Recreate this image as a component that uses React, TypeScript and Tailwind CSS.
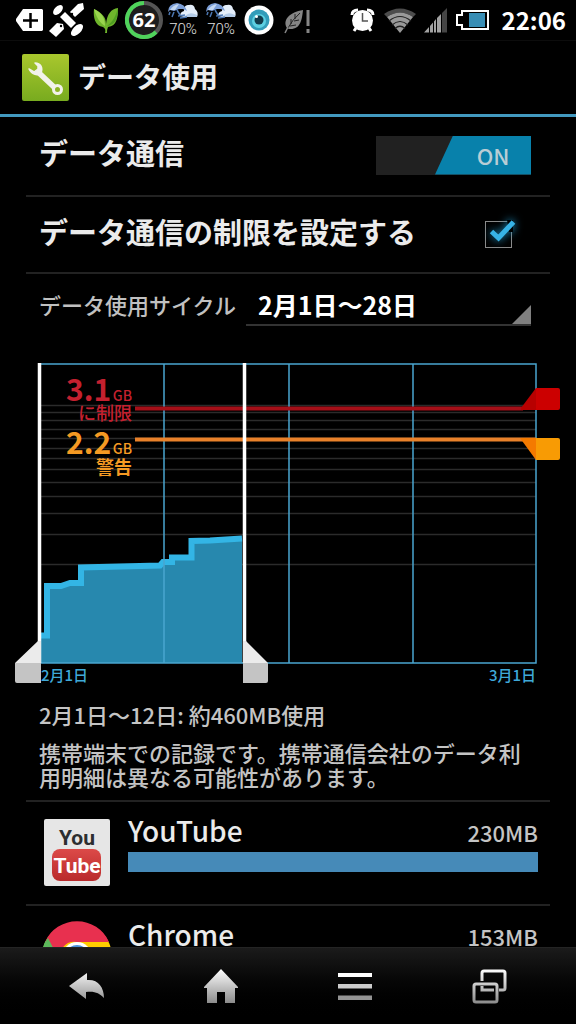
import React, { useState } from 'react';

const TagIcon = () => (
    <svg width="27" height="40" viewBox="0 0 27 40" className="shrink-0">
        <path d="M7 9H26L27 10V30L26 31H7L0 21V19Z" fill="#fff" />
        <path d="M14.500 13V28M7 20.500H22" stroke="#000" strokeWidth="2.5" />
    </svg>
);

const SatelliteIcon = () => (
    <svg width="35" height="40" viewBox="0 0 35 40" className="shrink-0" fill="#fff">
        <ellipse cx="9" cy="10" rx="3.5" ry="6" transform="rotate(45 9 10)" />
        <ellipse cx="28" cy="30" rx="4" ry="7.5" transform="rotate(45 28 30)" />
        <path d="M11 17L16 12L27 23L22 28Z" />
        <path d="M21 12L29 4L34 3L35 9L26 17Z" />
        <path d="M0 31L8 23L14 24L15 29L7 37Z" />
        <circle cx="23" cy="14" r="1.2" fill="#000" />
        <circle cx="12" cy="26" r="1.2" fill="#000" />
    </svg>
);

const GreenLeafIcon = () => (
    <svg width="29" height="40" viewBox="0 0 29 40" className="shrink-0">
        <path d="M15 33C16 30 15 28 13 27C5 26 3 17 4 9C12 13 16 17 16 24C17 14 21 9 28 8C28 17 27 26 18 27Q17 29 17 33Z" fill="#6fb52c" />
        <path d="M4 9C12 13 15 18 15 26C10 23 6 17 4 9Z" fill="#9ad64e" />
        <path d="M28 8C28 17 26 25 17 26C23 22 26 15 28 8Z" fill="#4f9e22" />
    </svg>
);

const RingIcon = () => (
    <svg width="36" height="40" viewBox="0 0 36 40" className="shrink-0 overflow-visible">
        <circle cx="19" cy="20" r="17" fill="#1d1d1d" stroke="#555" strokeWidth="4" />
        <path d="M19 3A17 17 0 1 0 31 32" fill="none" stroke="#4fd35b" strokeWidth="4" />
        <text x="19" y="27" textAnchor="middle" fill="#fff" fontSize="20" fontWeight="700" fontFamily="'Open Sans', sans-serif">62</text>
    </svg>
);

const RainIcon = () => (
    <svg width="32" height="40" viewBox="0 0 32 40" className="shrink-0">
        <path d="M13 16Q13 12 17 11Q17 4 22 5Q27 4 28 9Q32 12 30 17H17Z" fill="#e4eefa" />
        <path d="M18 16Q23 11 30 15V17H18Z" fill="#b4cce8" />
        <path d="M1 12Q1 4 10 3Q18 4 20 11L16 9L12 9L7 11L3 10Z" fill="#7c9fd8" />
        <path d="M3 10Q6 5 12 4L8 10Z" fill="#c4d8f2" />
        <path d="M10 10L13 15M3 12L2 15M7 12L5 17M11 16L18 15M13 18L20 17" fill="none" stroke="#4c78b4" strokeWidth="1.5" />
        <text x="16" y="34" textAnchor="middle" fill="#e0e0e0" fontSize="15" fontWeight="300" fontFamily="Roboto, sans-serif">70%</text>
    </svg>
);

const EyeIcon = () => (
    <svg width="32" height="40" viewBox="0 0 32 40" className="shrink-0">
        <circle cx="16" cy="20" r="14.5" fill="#fff" />
        <circle cx="16" cy="20" r="10.5" fill="#329cb9" />
        <circle cx="16" cy="21" r="7" fill="#5cd0e2" />
        <circle cx="16" cy="20" r="4.5" fill="#123b4b" />
        <circle cx="13.500" cy="16.500" r="1.5" fill="#fff" />
    </svg>
);

const GrayLeafIcon = () => (
    <svg width="30" height="40" viewBox="0 0 30 40" className="shrink-0">
        <path d="M6 28C1 20 9 12 22 10C21 19 20 30 8 29Z" fill="#858585" />
        <path d="M7 28Q11 20 19 13M10 24V19M14 19V14M9 26L15 25M13 21L18 20" fill="none" stroke="#222" />
        <path d="M4 33L7 27" stroke="#858585" strokeWidth="1.5" />
        <path d="M27 10V26M27 29V33" stroke="#858585" strokeWidth="3" />
    </svg>
);

const AlarmIcon = () => (
    <svg width="26" height="40" viewBox="0 0 26 40" className="shrink-0">
        <path d="M2 15Q2 10 8 10M17 10Q23 10 23 15M6 28L4 31M19 28L21 31" fill="none" stroke="#fff" strokeWidth="3" />
        <circle cx="12.500" cy="20.500" r="10.500" fill="#fff" />
        <path d="M12.500 13V21H18" fill="none" stroke="#555" strokeWidth="1.5" />
    </svg>
);

const WifiIcon = () => (
    <svg width="32" height="40" viewBox="0 0 32 40" className="shrink-0">
        <path d="M0 14Q16 3 32 14L29 17Q16 8 3 17Z" fill="#4c4c4c" />
        <path d="M3 17Q16 8 29 17L16 33Z" fill="#999" />
        <path d="M5 21Q16 12 27 21M8 25Q16 18 24 25M11 28.500Q16 24 21 28.500" fill="none" stroke="#222" strokeWidth="1.2" />
    </svg>
);

const SignalIcon = () => (
    <svg width="24" height="40" viewBox="0 0 24 40" className="shrink-0" fill="#a2a2a2">
        <path d="M0 32.500L5 27V32.500ZM6 26L9 22.500V32.500H6ZM10 21.500L12 19V32.500H10ZM13 18L17 14V32.500H13Z" />
        <path d="M18 13L23 8V32.500H18Z" fill="#454545" />
    </svg>
);

const BatteryIcon = () => (
    <svg width="34" height="40" viewBox="0 0 34 40" className="shrink-0">
        <path d="M6 11H32V29H6V25H1V15H6Z" fill="none" stroke="#fff" strokeWidth="2" />
        <path d="M13 13H29V27H13Z" fill="#398eb5" />
    </svg>
);

const StatusBar = () => (
    <div className="flex h-[41px] shrink-0 items-center gap-1.5 border-b border-[#0c0c0c] pr-2.5 pl-4">
        <TagIcon />
        <SatelliteIcon />
        <GreenLeafIcon />
        <RingIcon />
        <RainIcon />
        <RainIcon />
        <EyeIcon />
        <GrayLeafIcon />
        <div className="ml-auto flex items-center gap-2">
            <AlarmIcon />
            <WifiIcon />
            <SignalIcon />
            <BatteryIcon />
            <time className="ml-1 text-2xl leading-10 font-bold">22:06</time>
        </div>
    </div>
);

const SettingsIcon = () => (
    <svg width="48" height="48" viewBox="0 0 48 48" className="shrink-0">
        <defs>
            <linearGradient id="settings" x1="0" y1="0" x2="0" y2="1">
                <stop offset="0" stopColor="#a9c72d" />
                <stop offset="1" stopColor="#78ab1f" />
            </linearGradient>
        </defs>
        <rect x="0" y="0" width="47" height="47" rx="2" fill="url(#settings)" />
        <path d="M16 18L33 34" stroke="#f2f2ea" strokeWidth="5.5" />
        <path d="M13 9C19 9 21 14 19 19C16 22 10 21 7 15L12 18L16 15L16 12Z" fill="#f2f2ea" stroke="#f2f2ea" strokeWidth="1.5" strokeLinejoin="round" />
        <circle cx="35.500" cy="35.500" r="4" fill="#8db526" stroke="#f2f2ea" strokeWidth="3" />
    </svg>
);

const gridLines = [405, 412, 420, 429, 438, 448, 458, 469, 482, 496, 513, 534, 564];

const UsageChart = () => (
    <svg viewBox="0 350 576 342" className="block w-full" role="img" aria-label="データ使用量">
        {gridLines.map((y) => (
            <path key={y} d={`M41 ${y + 0.5}H536`} stroke="#2b2b2b" strokeWidth="1.5" />
        ))}
        <path d="M41 635H47V586H61L70 583H81V567L162 565V562L172 561V557H191V541L242 538V663H41Z" fill="#2788ae" />
        <path d="M41 635.500H47V586H61L70 583H81V567.500L160 565.500L163 562H172V557.500H191.500V541L210 540.500L242 538.500" fill="none" stroke="#33b5e5" strokeWidth="6" />
        <path d="M39 364H536V663H39ZM164 364V663M289 364V663M413 364V663" fill="none" stroke="#4aa5cf" strokeWidth="1.5" />

        <path d="M135 408.500H523" stroke="#a50f18" strokeWidth="4" />
        <path d="M521 408L536 388V410H521Z" fill="#b80000" />
        <path d="M536 388H558Q560 388 560 390V408Q560 410 558 410H536Z" fill="#cc0000" />
        <path d="M135 439.500H536" stroke="#e9812a" strokeWidth="4" />
        <path d="M520 438H536V460Z" fill="#f47a00" />
        <path d="M536 438H558Q560 438 560 440V458Q560 460 558 460H536Z" fill="#f89b04" />

        <path d="M39.500 363V663M244.500 363V663" stroke="#fff" strokeWidth="3.5" />
        <path d="M38 641L15 663H41V641ZM243 641H246L268 663H243Z" fill="#ebebeb" />
        <path d="M15 663H41V683H17Q15 683 15 681ZM243 663H268V681Q268 683 266 683H243Z" fill="#c4c4c4" />

        <g fill="#c4202f" fontWeight="700">
            <text x="66" y="401" fontSize="30">3.1</text>
            <text x="132" y="401" fontSize="14" fontWeight="500" textAnchor="end">GB</text>
            <text x="132" y="420" fontSize="18" fontWeight="500" textAnchor="end">に制限</text>
        </g>
        <g fill="#f59a23" fontWeight="700">
            <text x="66" y="454" fontSize="30">2.2</text>
            <text x="132" y="454" fontSize="14" fontWeight="500" textAnchor="end">GB</text>
            <text x="132" y="474" fontSize="18" textAnchor="end">警告</text>
        </g>
        <g fill="#3fa9d8" fontSize="15" fontWeight="500">
            <text x="41" y="681">2月1日</text>
            <text x="536" y="681" textAnchor="end">3月1日</text>
        </g>
    </svg>
);

const YouTubeIcon = () => (
    <svg width="68" height="68" viewBox="0 0 68 68" className="shrink-0">
        <defs>
            <linearGradient id="tube" x1="0" y1="0" x2="0" y2="1">
                <stop offset="0" stopColor="#dc4a48" />
                <stop offset="1" stopColor="#b92a2b" />
            </linearGradient>
        </defs>
        <rect x="1" y="0" width="66" height="67" rx="2" fill="#e6e6e6" />
        <rect x="9" y="30" width="49" height="32" rx="8" fill="url(#tube)" />
        <g fontFamily="Roboto, sans-serif" fontWeight="700" textAnchor="middle">
            <text x="34" y="26" fontSize="21" fill="#2c2e30">You</text>
            <text x="34" y="54" fontSize="21" fill="#fff">Tube</text>
        </g>
    </svg>
);

const ChromeIcon = () => (
    <svg width="68" height="68" viewBox="0 0 68 68" className="shrink-0 overflow-visible">
        <circle cx="34" cy="34" r="35" fill="#fc0" />
        <path d="M2 19A35 35 0 0 1 66 19H34A15 15 0 0 0 19 42Z" fill="#e8304f" />
        <path d="M2 19A35 35 0 0 0 32 69L47 42A15 15 0 0 1 19 42L5 15Z" fill="#5cb85c" />
        <circle cx="34" cy="34" r="15" fill="#fff" />
        <circle cx="34" cy="34" r="12" fill="#4a90d9" />
    </svg>
);

const apps = [
    { name: 'YouTube', usage: '230MB', percent: 100, icon: <YouTubeIcon /> },
    { name: 'Chrome', usage: '153MB', percent: 67, icon: <ChromeIcon /> },
];

const NavBar = () => (
    <nav className="grid h-[77px] shrink-0 grid-cols-4 border-t border-[#242424] bg-linear-to-b from-[#1b1b1b] to-black px-5">
        <svg width="0" height="0" className="absolute">
            <defs>
                <linearGradient id="nav" gradientUnits="userSpaceOnUse" x1="0" y1="2" x2="0" y2="36">
                    <stop offset="0" stopColor="#fff" />
                    <stop offset="1" stopColor="#8c8c8c" />
                </linearGradient>
            </defs>
        </svg>
        <button type="button" aria-label="戻る" className="flex items-center justify-center">
            <svg width="36" height="38" viewBox="0 0 36 38">
                <path d="M0 19L18 6V13C29 12 35 20 35 31C30 26 26 24 17 25V32Z" fill="url(#nav)" />
            </svg>
        </button>
        <button type="button" aria-label="ホーム" className="flex items-center justify-center">
            <svg width="36" height="38" viewBox="0 0 36 38">
                <path d="M18 2L35 20V21H32V36H22V25H14V36H4V21H1V20Z" fill="url(#nav)" />
            </svg>
        </button>
        <button type="button" aria-label="メニュー" className="flex items-center justify-center">
            <svg width="36" height="38" viewBox="0 0 36 38">
                <path d="M1 6H35V10H1Z" fill="#fff" />
                <path d="M1 17H35V21.500H1Z" fill="#ccc" />
                <path d="M1 28.500H35V33H1Z" fill="#939393" />
            </svg>
        </button>
        <button type="button" aria-label="履歴" className="flex items-center justify-center">
            <svg width="36" height="38" viewBox="0 0 36 38" fill="none" stroke="url(#nav)" strokeWidth="3">
                <path d="M11 14V6Q11 4 13 4H32Q34 4 34 6V21Q34 23 32 23H28M11 19V23H23" />
                <rect x="3" y="17" width="23" height="18" rx="2" />
            </svg>
        </button>
    </nav>
);

const App = () => {
    const [enabled, setEnabled] = useState(true);
    const [limited, setLimited] = useState(true);

    return (
        <div className="flex h-screen flex-col overflow-hidden bg-black font-['Noto_Sans_CJK_JP',sans-serif] font-medium text-white">
            <StatusBar />
            <header className="flex h-[76px] shrink-0 items-center gap-2 border-b-3 border-[#4299bf] px-[22px]">
                <SettingsIcon />
                <h1 className="pb-1 text-[28px] leading-10 font-bold text-[#ebebeb]">データ使用</h1>
            </header>

            <main className="min-h-0 flex-1 overflow-hidden">
                <section className="px-[26px]">
                    <div className="flex h-20 items-center justify-between border-b-2 border-[#222] pr-[19px] pl-[13px]">
                        <span id="data-label" className="pb-2 text-[29px] leading-10 font-bold text-[#ebebeb]">データ通信</span>
                        <button
                            type="button"
                            role="switch"
                            aria-checked={enabled}
                            aria-labelledby="data-label"
                            onClick={() => setEnabled(!enabled)}
                            className="mb-0.5 flex h-[39px] w-[155px] justify-end bg-[#212121]"
                        >
                            <span className="flex h-full w-24 items-center justify-center bg-[#0881ab] pl-5 text-[22px] text-[#b9cdd5] [clip-path:polygon(18px_0,100%_0,100%_100%,0_100%)]">
                                {enabled ? 'ON' : 'OFF'}
                            </span>
                        </button>
                    </div>

                    <div className="flex h-[77px] items-center justify-between border-b-2 border-[#222] pr-[38px] pl-[13px]">
                        <label htmlFor="limit" className="pb-2 text-[29px] leading-10 font-bold text-[#ebebeb]">データ通信の制限を設定する</label>
                        <div className="relative flex">
                            <input
                                id="limit"
                                type="checkbox"
                                checked={limited}
                                onChange={() => setLimited(!limited)}
                                className="size-[27px] appearance-none border border-[#8a8a8a]"
                            />
                            {limited && (
                                <svg width="34" height="30" viewBox="0 0 34 30" className="pointer-events-none absolute -top-1 left-0 drop-shadow-[0_0_4px_#1b8fc0]">
                                    <path d="M22 3H28V15H24Z" fill="#000" />
                                    <path d="M6.500 14.500L13.500 21L28.500 5" fill="none" stroke="#37b3e6" strokeWidth="5" />
                                </svg>
                            )}
                        </div>
                    </div>

                    <div className="flex h-[76px] items-start gap-2.5 pt-3 pr-[19px] pl-[13px]">
                        <label htmlFor="cycle" className="shrink-0 pt-0.5 text-[22px] leading-8 text-[#c0c0c0]">データ使用サイクル</label>
                        <div className="relative flex-1">
                            <select id="cycle" className="block h-10 w-full appearance-none border-b-2 border-[#333] pb-1 pl-3 text-[25px] leading-9 font-bold text-white">
                                <option>2月1日～28日</option>
                            </select>
                            <svg width="19" height="19" viewBox="0 0 19 19" className="pointer-events-none absolute right-0 bottom-0.5">
                                <path d="M19 0V19H0Z" fill="#808080" />
                            </svg>
                        </div>
                    </div>
                </section>

                <UsageChart />

                <section className="space-y-3 px-[39px] pt-2 pb-3 text-[22px] text-[#c4c4c4]">
                    <p className="leading-7">2月1日～12日: 約460MB使用</p>
                    <p className="leading-6">携帯端末での記録です。携帯通信会社のデータ利用明細は異なる可能性があります。</p>
                </section>

                <ul className="px-[26px]">
                    {apps.map((app) => (
                        <li key={app.name} className="flex h-[104px] gap-[17px] border-t-2 border-[#222] pt-[17px] pr-3 pl-[17px]">
                            {app.icon}
                            <div className="min-w-0 flex-1">
                                <div className="flex h-[33px] items-center justify-between">
                                    <span className="-mt-3 text-[28px] leading-8 text-[#ebebeb]">{app.name}</span>
                                    <span className="-mt-2 text-[22px] leading-8 text-[#c4c4c4]">{app.usage}</span>
                                </div>
                                <div className="h-5 bg-[#468ab8]" style={{ width: `${app.percent}%` }} />
                            </div>
                        </li>
                    ))}
                </ul>
            </main>

            <NavBar />
        </div>
    );
};

export default App;
